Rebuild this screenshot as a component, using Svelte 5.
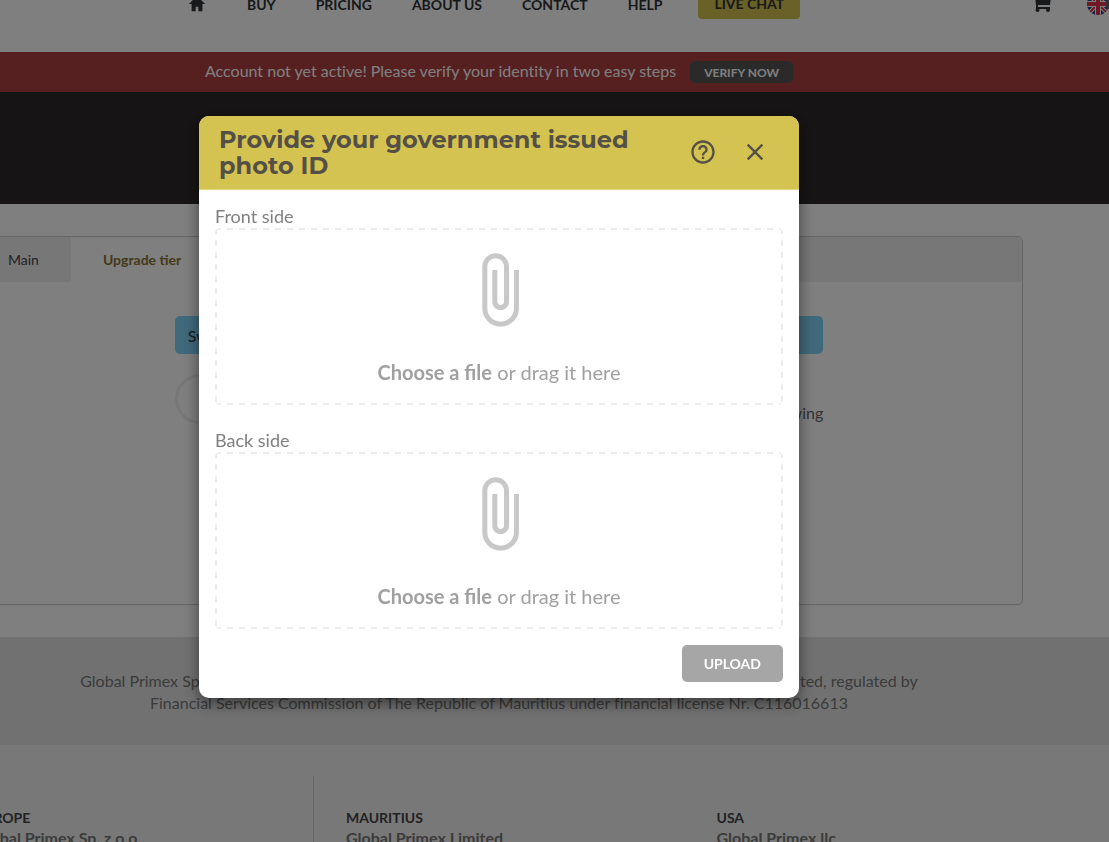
<script>
  const links = ['BUY', 'PRICING', 'ABOUT US', 'CONTACT', 'HELP'];
  const offices = [
    { region: 'EUROPE', company: 'Global Primex Sp. z o.o.' },
    { region: 'MAURITIUS', company: 'Global Primex Limited' },
    { region: 'USA', company: 'Global Primex llc' }
  ];
  const sides = [
    { id: 'front', label: 'Front side' },
    { id: 'back', label: 'Back side' }
  ];
</script>

<div class="page">
  <header class="top">
    <nav>
      <a class="home" href="#home" aria-label="Home">
        <svg viewBox="0 0 20 18" width="18" height="18"><path fill="currentColor" d="M10 0 1 9h3v8h4.500v-5h3v5H16V9h3z" /></svg>
      </a>
      {#each links as link}
        <a href="#{link}">{link}</a>
      {/each}
      <a class="chat" href="#chat">LIVE CHAT</a>
    </nav>
    <div class="tools">
      <a href="#cart" aria-label="Cart">
        <svg viewBox="0 0 20 20" width="20" height="20">
          <path fill="currentColor" d="M0 0h4l1 2h14l-1 9H6v2h12v2H4v-4L3 2H0z" />
          <circle cx="5.500" cy="16" r="2" fill="currentColor" />
          <circle cx="16" cy="16" r="2" fill="currentColor" />
        </svg>
      </a>
      <button class="lang" aria-label="Language">
        <svg viewBox="0 0 24 24" width="24" height="24">
          <defs><clipPath id="round"><circle cx="12" cy="12" r="11" /></clipPath></defs>
          <g clip-path="url(#round)">
            <path fill="#24408e" d="M0 0h24v24H0z" />
            <path stroke="#fff" stroke-width="4" d="m2 2 20 20M22 2 2 22" />
            <path stroke="#e0304a" stroke-width="2" d="m2 2 20 20M22 2 2 22" />
            <path stroke="#fff" stroke-width="6" d="M12 0v24M0 12h24" />
            <path stroke="#e0304a" stroke-width="4" d="M12 0v24M0 12h24" />
          </g>
          <circle cx="24" cy="12" r="5" fill="#666" />
        </svg>
      </button>
    </div>
  </header>

  <div class="notice">
    <span>Account not yet active! Please verify your identity in two easy steps</span>
    <button>VERIFY NOW</button>
  </div>
  <div class="hero"></div>

  <main>
    <section class="panel">
      <div class="tabs">
        <button>Main</button>
        <button class="active">Upgrade tier</button>
      </div>
      <div class="panel-body">
        <p class="info">Switch to a higher tier to raise your limits</p>
        <div class="step">
          <span class="ring"></span>
          <p>Verify your identity by completing the following</p>
        </div>
      </div>
    </section>
  </main>

  <section class="legal">
    <p>Global Primex Sp. z o.o. is registered in Poland and acts as the payment agent of the Global Primex Limited, regulated by<br />
      Financial Services Commission of The Republic of Mauritius under financial license Nr. C116016613</p>
  </section>

  <footer>
    {#each offices as office}
      <div class="office">
        <h3>{office.region}</h3>
        <p>{office.company}</p>
      </div>
    {/each}
  </footer>
</div>

<div class="backdrop">
  <div class="modal" role="dialog" aria-modal="true" aria-labelledby="title">
    <div class="modal-head">
      <h2 id="title">Provide your government issued photo ID</h2>
      <button aria-label="Help">
        <svg viewBox="0 0 24 24" width="28" height="28"><path fill="currentColor" d="M11 18h2v-2h-2v2zm1-16C6.480 2 2 6.480 2 12s4.480 10 10 10 10-4.480 10-10S17.520 2 12 2zm0 18c-4.410 0-8-3.590-8-8s3.590-8 8-8 8 3.590 8 8-3.590 8-8 8zm0-14c-2.210 0-4 1.790-4 4h2c0-1.100.9-2 2-2s2 .9 2 2c0 2-3 1.750-3 5h2c0-2.250 3-2.500 3-5 0-2.210-1.790-4-4-4z" /></svg>
      </button>
      <button aria-label="Close">
        <svg viewBox="0 0 24 24" width="28" height="28"><path fill="currentColor" d="M19 6.410 17.590 5 12 10.590 6.410 5 5 6.410 10.590 12 5 17.590 6.410 19 12 13.410 17.590 19 19 17.590 13.410 12z" /></svg>
      </button>
    </div>
    <form class="modal-body">
      {#each sides as side}
        <div class="side">
          <span class="side-name" id="{side.id}-name">{side.label}</span>
          <label class="drop" for={side.id}>
            <svg viewBox="0 0 24 24" width="80" height="80"><path fill="#c8c8c8" d="M16.500 6v11.500c0 2.210-1.790 4-4 4s-4-1.790-4-4V5c0-1.380 1.120-2.500 2.500-2.500s2.500 1.120 2.500 2.500v10.500c0 .55-.45 1-1 1s-1-.45-1-1V6H10v9.500c0 1.380 1.120 2.500 2.500 2.500s2.500-1.120 2.500-2.500V5c0-2.210-1.790-4-4-4S7 2.790 7 5v12.500c0 3.040 2.460 5.500 5.500 5.500s5.500-2.460 5.500-5.500V6h-1.500z" /></svg>
            <span><strong>Choose a file</strong> or drag it here</span>
            <input id={side.id} type="file" aria-describedby="{side.id}-name" />
          </label>
        </div>
      {/each}
      <button class="upload" type="button">UPLOAD</button>
    </form>
  </div>
</div>

<style>
  :global(body) {
    overflow: hidden;
    font-family: Lato, 'Liberation Sans', sans-serif;
    font-variant-ligatures: none;
  }
  * {
    box-sizing: border-box;
  }
  p, h2, h3 {
    margin: 0;
  }
  button {
    border: 0;
    padding: 0;
    background: none;
    font-family: inherit;
    cursor: pointer;
  }
  svg {
    display: block;
  }
  .page {
    margin: -42px 0 0 -111px;
    background: #fff;
    color: #666;
    font-size: 16px;
  }
  .top {
    height: 94px;
    padding: 0 0 2px 299px;
    display: flex;
    align-items: center;
    justify-content: space-between;
  }
  nav {
    display: flex;
    align-items: center;
    gap: 40px;
  }
  nav a {
    color: #2e3234;
    font-size: 14px;
    font-weight: 700;
    text-decoration: none;
  }
  nav .home {
    margin-right: 1px;
  }
  nav .chat {
    margin-left: -4px;
    padding: 7px 16px;
    border-radius: 4px;
    background: #d4c350;
    line-height: 16px;
  }
  .tools {
    display: flex;
    align-items: center;
    gap: 34px;
    color: #2e3234;
  }
  .tools a {
    color: inherit;
  }
  .lang svg {
    margin-right: -1px;
    overflow: visible;
  }
  .notice {
    height: 40px;
    display: flex;
    align-items: center;
    justify-content: center;
    gap: 14px;
    background: #ac4042;
    color: #fff;
  }
  .notice span {
    padding-bottom: 4px;
  }
  .notice button {
    height: 22px;
    padding: 0 14px;
    border-radius: 5px;
    background: #555;
    color: #fff;
    font-size: 12px;
    font-weight: 700;
  }
  .hero {
    height: 112px;
    background: #2d292a;
  }
  main {
    padding: 32px 86px;
  }
  .panel {
    min-height: 369px;
    border: 1px solid #ccc;
    border-radius: 5px;
    overflow: hidden;
  }
  .tabs {
    display: flex;
    background: #efefef;
  }
  .tabs button {
    height: 45px;
    padding: 0 32px;
    color: #444;
    font-size: 14px;
  }
  .tabs .active {
    background: #fff;
    color: #857533;
    font-weight: 700;
  }
  .panel-body {
    width: 62%;
    margin: 34px auto 0;
  }
  .info {
    padding: 10px 13px 8px;
    border-radius: 5px;
    background: #80d3f8;
    color: #333;
    line-height: 20px;
  }
  .step {
    margin-top: 20px;
    display: flex;
    align-items: center;
    justify-content: space-between;
  }
  .step p {
    padding-top: 26px;
  }
  .ring {
    width: 50px;
    height: 50px;
    border: 3px solid #eee;
    border-radius: 50%;
  }
  .legal {
    padding: 33px 0 31px;
    background: #e3e3e3;
    color: #777;
    text-align: center;
    line-height: 22px;
  }
  footer {
    padding: 31px 54px 32px 86px;
    display: grid;
    grid-template-columns: 339px 1fr 1fr;
    gap: 0 32px;
    background: #f0f0f0;
  }
  .office {
    padding-top: 32px;
    height: 130px;
    color: #444;
    font-weight: 700;
    line-height: 20px;
  }
  .office:first-child {
    border-right: 1px solid #d0d0d0;
  }
  .office h3 {
    font-size: 14px;
  }
  .office p {
    color: #777;
  }
  .backdrop {
    position: fixed;
    inset: 0 0 0 -111px;
    padding-top: 116px;
    background: rgba(0, 0, 0, 0.5);
  }
  .modal {
    width: 100%;
    max-width: 600px;
    margin: 0 auto;
    border-radius: 10px;
    overflow: hidden;
    background: #fff;
    box-shadow: 0 5px 15px rgba(0, 0, 0, 0.5);
  }
  .modal-head {
    padding: 11px 18px 10px 20px;
    display: flex;
    align-items: center;
    border-bottom: 1px solid #e3d888;
    background: #d4c350;
    color: #555047;
  }
  .modal-head h2 {
    flex: 1;
    font-family: Montserrat, Inter, sans-serif;
    font-size: 24px;
    font-weight: 700;
    line-height: 26px;
  }
  .modal-head button {
    padding: 11px 12px 13px;
    color: inherit;
  }
  .modal-body {
    padding: 15px 16px 16px;
    display: flex;
    flex-direction: column;
    gap: 24px;
  }
  .side {
    color: #808080;
    font-size: 18px;
    line-height: 23px;
  }
  .side-name {
    display: block;
  }
  .drop {
    --dash: #ececec 0 6px, transparent 6px 12px;
    position: relative;
    height: 177px;
    padding-top: 22px;
    display: flex;
    flex-direction: column;
    align-items: center;
    gap: 28px;
    border-radius: 5px;
    background:
      repeating-linear-gradient(90deg, var(--dash)) 0 0 / 100% 2px no-repeat,
      repeating-linear-gradient(90deg, var(--dash)) 0 100% / 100% 2px no-repeat,
      repeating-linear-gradient(180deg, var(--dash)) 0 0 / 2px 100% no-repeat,
      repeating-linear-gradient(180deg, var(--dash)) 100% 0 / 2px 100% no-repeat;
    color: #a0a0a0;
    font-size: 20px;
    line-height: 28px;
    font-variant-ligatures: normal;
  }
  .drop input {
    position: absolute;
    inset: 0;
    width: 100%;
    opacity: 0;
  }
  .upload {
    align-self: flex-end;
    height: 37px;
    margin-top: -8px;
    padding: 0 22px;
    border-radius: 5px;
    background: #a6a6a6;
    color: #fff;
    font-size: 14px;
    font-weight: 700;
  }
</style>
